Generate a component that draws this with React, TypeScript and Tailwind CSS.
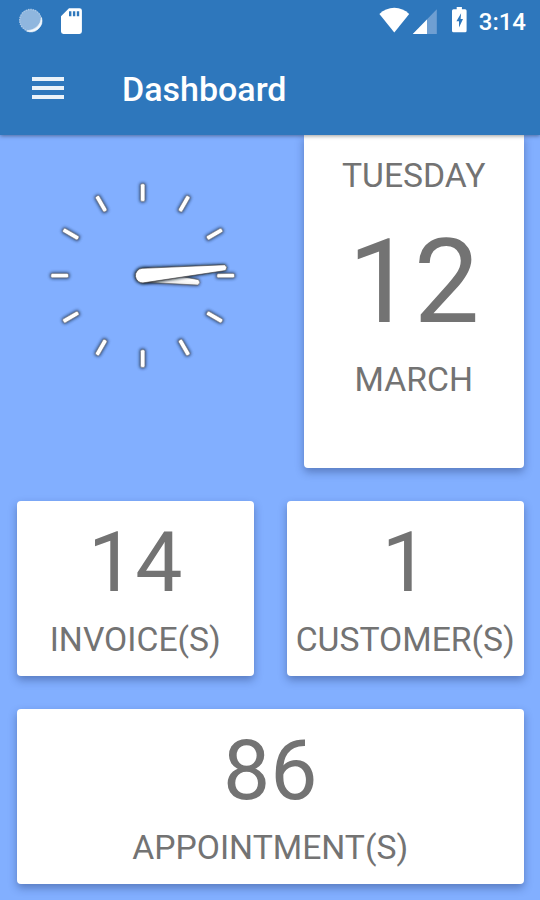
import React from 'react';

const StatusBar: React.FC = () => (
  <div className="flex h-[42px] shrink-0 items-center justify-between pl-[18px] pr-[14px]">
    <div className="flex items-center gap-[17px]">
      {/* Sync spinner */}
      <svg width="26" height="26" viewBox="0 0 26 26">
        <circle cx="12.5" cy="12.3" r="11" fill="#8fb6de" />
        <circle cx="12.5" cy="12.3" r="10.8" fill="none" stroke="#a9c7e6" strokeWidth="1.4" strokeDasharray="1.4 1" />
        <path d="M23.500 9.500A11.200 11.200 0 0 1 8.500 23Q22 21.500 23.500 9.500z" fill="#f2f7fc" stroke="#f2f7fc" strokeWidth="0.6" />
      </svg>
      {/* SD card */}
      <svg width="22" height="26" viewBox="0 0 22 26">
        <path
          fillRule="evenodd"
          fill="#fff"
          d="M8 .2h10.5a2.4 2.4 0 0 1 2.4 2.4v20.9a2.4 2.4 0 0 1-2.4 2.4H2.4A2.4 2.4 0 0 1 0 23.5V8.2zM8 3.2v5h2.4v-5zm3.9 0v5h2.4v-5zm3.9 0v5h2.4v-5z"
        />
      </svg>
    </div>
    <div className="flex h-[42px] items-start">
      {/* Wifi */}
      <svg className="mt-[7px]" width="32" height="26" viewBox="-0.500 0 32 26">
        <path d="M.9 7C5 3.100 10 .8 15.800 .8s10.800 2.300 14.900 6.200L15.800 25.500z" fill="#fff" />
      </svg>
      {/* Cell signal */}
      <svg className="ml-[2px] mt-2" width="26" height="26" viewBox="-0.500 0 26 26">
        <path d="M24.300 1.200V26H.3z" fill="#6f9fd2" />
        <path d="M14.500 11.400V26H.3z" fill="#fff" />
      </svg>
      {/* Battery */}
      <svg className="ml-[13px] mt-[7px]" width="16" height="26" viewBox="-0.500 0 16 26">
        <path
          fillRule="evenodd"
          fill="#fff"
          d="M5.200 0h5.200v2.200h3.200a1.500 1.500 0 0 1 1.500 1.500v20a1.500 1.500 0 0 1-1.500 1.500H2A1.500 1.500 0 0 1 .5 23.700V3.700A1.500 1.500 0 0 1 2 2.200h3.200zM9.600 6.300L4.900 14.200h2.600v6.200L11.500 11.900H9.100z"
        />
      </svg>
      <span className="ml-[11.5px] pt-px text-2xl font-medium leading-[42px] text-white">3:14</span>
    </div>
  </div>
);

const AppBar: React.FC = () => (
  <header className="relative z-10 flex h-[135px] shrink-0 flex-col bg-[#2e77bc] shadow-[0_1px_4px_rgba(0,0,0,0.4)]">
    <StatusBar />
    <div className="flex h-[92px] items-center pl-8">
      <button className="flex w-8 flex-col gap-[5px]" aria-label="Menu">
        <span className="h-1 w-full bg-[#eaf2f9]" />
        <span className="h-1 w-full bg-[#eaf2f9]" />
        <span className="h-1 w-full bg-[#eaf2f9]" />
      </button>
      <h1 className="ml-[58px] pt-0.5 text-[34px] font-medium leading-10 text-white">Dashboard</h1>
    </div>
  </header>
);

const HOURS = Array.from({ length: 12 }, (_, i) => i * 30);

const AnalogClock: React.FC = () => (
  <svg width="210" height="210" viewBox="-104.7 -105.600 210 210">
    <defs>
      <filter id="glow" filterUnits="userSpaceOnUse" x="-105" y="-105" width="210" height="210">
        <feGaussianBlur stdDeviation="1.4" />
      </filter>
      <linearGradient id="hand" x1="0" y1="0" x2="0" y2="1">
        <stop offset="0.4" stopColor="#fff" />
        <stop offset="1" stopColor="#e4e4e4" />
      </linearGradient>
    </defs>
    {HOURS.map((angle) => (
      <g key={angle} transform={`rotate(${angle})`}>
        <rect x="-3.200" y="-92.800" width="6.400" height="19.800" rx="2.500" fill="#1c2c48" opacity="0.8" filter="url(#glow)" />
        <rect x="-2.200" y="-91.800" width="4.400" height="17.600" rx="1.500" fill="#fff" stroke="#77787c" strokeWidth="0.6" />
      </g>
    ))}
    {/* Hour hand */}
    <g transform="rotate(7)">
      <path d="M0-7.500L56-3.600Q59.500 0 56 3.600L0 7.500z" fill="#141e30" opacity="0.8" filter="url(#glow)" />
      <path d="M0-6.500L56-2.700Q59 0 56 2.700L0 6.500z" fill="url(#hand)" stroke="#666" strokeWidth="0.6" />
    </g>
    {/* Minute hand */}
    <g transform="rotate(-5.500)">
      <path d="M0-8.500L83-3.600Q86.500 0 83 3.600L0 8.500A8.500 8.500 0 0 1 0-8.500z" fill="#0c1320" opacity="0.95" filter="url(#glow)" />
      <path d="M0-7.300L83-2.900Q86 0 83 2.900L0 7.300A7.300 7.300 0 0 1 0-7.300z" fill="#fff" stroke="#444" strokeWidth="0.6" />
    </g>
  </svg>
);

const StatCard: React.FC<{ value: number; label: string }> = ({ value, label }) => (
  <div className="flex h-[174.500px] flex-1 flex-col items-center rounded-[4px] bg-white pt-3 shadow-[0_4px_8px_rgba(20,40,90,0.38)]">
    <span className="text-[84px] leading-[100px]">{value}</span>
    <span className="mt-[7px] whitespace-nowrap text-[33.700px] leading-10">{label}</span>
  </div>
);

const App: React.FC = () => {
  return (
    <div className="flex h-[900px] w-[540px] flex-col overflow-hidden bg-[#82afff] font-['Roboto',sans-serif] text-[#737373]">
      <AppBar />

      <main className="flex flex-col gap-[33.500px] pl-[17px] pr-[16.500px]">
        <div className="flex h-[332.500px] justify-between">
          <div className="pl-[21px] pt-[35px]">
            <AnalogClock />
          </div>
          {/* Date */}
          <div className="flex w-[219.500px] flex-col items-center rounded-b-[4px] bg-white pt-[21px] shadow-[0_4px_8px_rgba(20,40,90,0.38)]">
            <span className="text-[33.700px] leading-10">TUESDAY</span>
            <span className="mt-4 text-[117px] leading-[140px]">12</span>
            <span className="mt-2 text-[33.700px] leading-10">MARCH</span>
          </div>
        </div>

        <div className="flex gap-[33.500px]">
          <StatCard value={14} label="INVOICE(S)" />
          <StatCard value={1} label="CUSTOMER(S)" />
        </div>

        <div className="flex">
          <StatCard value={86} label="APPOINTMENT(S)" />
        </div>
      </main>
    </div>
  );
};

export default App;
